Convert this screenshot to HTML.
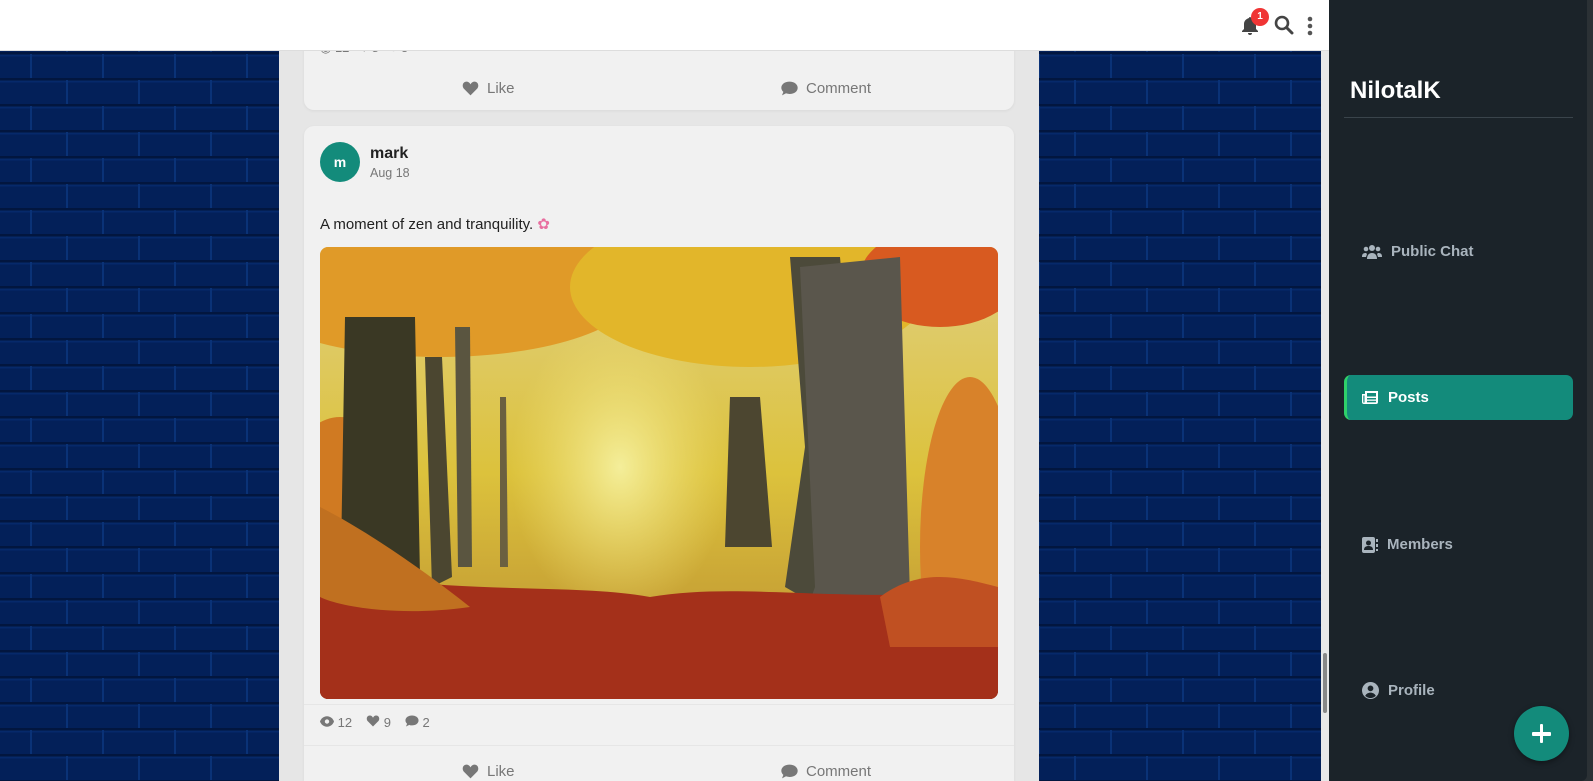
<!DOCTYPE html>
<html><head><meta charset="utf-8"><style>
*{margin:0;padding:0;box-sizing:border-box}
html,body{width:1593px;height:781px;overflow:hidden}
body{position:relative;font-family:"Liberation Sans",sans-serif;background:#2b3135}
.bg{position:absolute;left:0;top:0;width:1321px;height:781px}
.col{position:absolute;left:279px;top:0;width:760px;height:781px;background:#e6e6e6}
.card{position:absolute;left:304px;width:710px;background:#f1f1f1;border-radius:10px;box-shadow:0 1px 3px rgba(0,0,0,.06);overflow:hidden}
.hdr{position:absolute;left:0;top:0;width:1329px;height:51px;background:#fff;border-bottom:1px solid #ddd}
.side{position:absolute;left:1329px;top:0;width:258px;height:781px;background:#1b2329;border-radius:0 0 6px 0}
.gray{color:#777}
.act{position:absolute;font-size:15px;color:#777;display:flex;align-items:center;gap:8px}
.nav{position:absolute;left:1362px;font-size:15px;font-weight:bold;color:#a9b4bd;display:flex;align-items:center;gap:9px}
</style></head><body>
<svg class="bg" width="1321" height="781">
 <defs><pattern id="br" width="144" height="52" patternUnits="userSpaceOnUse">
  <rect width="144" height="52" fill="#032059"/>
  <rect x="0" y="0" width="144" height="2.5" fill="#02163f"/>
  <rect x="0" y="26" width="144" height="2.5" fill="#02163f"/>
  <rect x="0" y="2.5" width="144" height="2" fill="#06296a"/>
  <rect x="0" y="28.5" width="144" height="2" fill="#06296a"/>
  <rect x="30" y="2" width="2" height="24" fill="#0a3277"/>
  <rect x="102" y="2" width="2" height="24" fill="#0a3277"/>
  <rect x="66" y="28" width="2" height="24" fill="#0a3277"/>
  <rect x="138" y="28" width="2" height="24" fill="#0a3277"/>
 </pattern></defs>
 <rect width="1321" height="781" fill="url(#br)"/>
</svg>
<div class="col"></div>
<div style="position:absolute;left:1321px;top:51px;width:8px;height:730px;background:#e8e8e8"></div>
<div style="position:absolute;left:1323px;top:653px;width:4px;height:60px;background:#888;border-radius:2px"></div>

<div class="card" style="top:20px;height:90px">
 <div style="position:absolute;left:16px;top:20px;font-size:13px" class="gray">◉ 12 &nbsp; ♥ 8 &nbsp; ● 5</div>
 <div class="act" style="left:158px;top:60px"><svg width="17" height="15" viewBox="0 0 24 22"><path d="M12 21L2 11C-1 7 1 1 6 1c3 0 5 2 6 4 1-2 3-4 6-4 5 0 7 6 4 10z" fill="#777"/></svg>Like</div>
 <div class="act" style="left:477px;top:60px"><svg width="17" height="15" viewBox="0 0 24 22"><path d="M12 1C5 1 0 5 0 10c0 2 1 4 3 6l-2 5 6-3c2 1 3 1 5 1 7 0 12-4 12-9S19 1 12 1z" fill="#777"/></svg>Comment</div>
</div>
<div class="hdr">
 <svg style="position:absolute;left:1240px;top:16px" width="20" height="20" viewBox="0 0 20 20"><path d="M10 1c-1 0-1 1-1 1C6 3 4 5 4 8v5l-2 2v1h16v-1l-2-2V8c0-3-2-5-5-6 0 0 0-1-1-1zM8 17a2 2 0 004 0z" fill="#444"/></svg>
 <div style="position:absolute;left:1251px;top:8px;width:18px;height:18px;border-radius:50%;background:#f03535;color:#fff;font-size:10px;font-weight:bold;text-align:center;line-height:18px">1</div>
 <svg style="position:absolute;left:1274px;top:15px" width="20" height="20" viewBox="0 0 20 20"><circle cx="8" cy="8" r="6" stroke="#444" stroke-width="2.6" fill="none"/><path d="M12.5 12.5L18 18" stroke="#444" stroke-width="3" stroke-linecap="round"/></svg>
 <svg style="position:absolute;left:1306px;top:15px" width="8" height="22" viewBox="0 0 8 22"><circle cx="4" cy="4" r="2.3" fill="#555"/><circle cx="4" cy="11" r="2.3" fill="#555"/><circle cx="4" cy="18" r="2.3" fill="#555"/></svg>
</div>

<div class="card" style="top:126px;height:655px;border-radius:10px 10px 0 0">
 <div style="position:absolute;left:16px;top:16px;width:40px;height:40px;border-radius:50%;background:#138b7b;color:#fff;font-weight:bold;font-size:14px;text-align:center;line-height:40px">m</div>
 <div style="position:absolute;left:66px;top:19px;font-size:16px;font-weight:bold;color:#222">mark</div>
 <div style="position:absolute;left:66px;top:40px;font-size:12.5px" class="gray">Aug 18</div>
 <div style="position:absolute;left:16px;top:89px;font-size:15px;color:#222">A moment of zen and tranquility. <span style="color:#e86fa0">✿</span></div>
 <svg style="position:absolute;left:16px;top:121px;border-radius:8px" width="678" height="452" viewBox="0 0 678 452">
  <defs><linearGradient id="sk" x1="0" y1="0" x2="0" y2="1"><stop offset="0" stop-color="#e0cf80"/><stop offset=".5" stop-color="#dcc23c"/><stop offset="1" stop-color="#b88a30"/></linearGradient>
  <linearGradient id="fl" x1="0" y1="0" x2="0" y2="1"><stop offset="0" stop-color="#b4482a"/><stop offset="1" stop-color="#7e1a0e"/></linearGradient>
  <radialGradient id="gl" cx=".5" cy=".5" r=".5"><stop offset="0" stop-color="#f4ee9a"/><stop offset="1" stop-color="#f0e070" stop-opacity="0"/></radialGradient></defs>
  <rect width="678" height="452" fill="url(#sk)"/>
  <ellipse cx="300" cy="220" rx="110" ry="150" fill="url(#gl)"/>
  <ellipse cx="120" cy="40" rx="200" ry="70" fill="#e09a28"/>
  <ellipse cx="430" cy="40" rx="180" ry="80" fill="#e2b62a"/>
  <ellipse cx="620" cy="30" rx="80" ry="50" fill="#d85a20"/>
  <ellipse cx="20" cy="300" rx="70" ry="130" fill="#d07a22"/>
  <ellipse cx="650" cy="300" rx="50" ry="170" fill="#d8822a"/>
  <path d="M25 70L95 70 100 330 135 370 20 370z" fill="#3a3824"/>
  <path d="M105 110L122 110 132 330 112 340z" fill="#4b4630"/>
  <path d="M135 80L150 80 152 320 138 320z" fill="#5a5540"/>
  <path d="M180 150L186 150 188 320 180 320z" fill="#6b6040"/>
  <path d="M410 150L440 150 452 300 405 300z" fill="#4c4630"/>
  <path d="M470 10L520 10 530 120 545 340 500 360 465 340 485 200z" fill="#4c4a3a"/>
  <path d="M480 20L580 10 590 350 640 400 470 410 495 340z" fill="#5a564c"/>
  <rect x="0" y="360" width="678" height="92" fill="url(#fl)"/>
  <path d="M0 320C120 350 250 335 330 350 420 335 500 355 678 345V452H0z" fill="#a4301a"/>
  <path d="M0 260C40 280 100 320 150 360 80 370 20 360 0 350z" fill="#c07020"/>
  <path d="M560 350C600 320 640 330 678 340V400H570z" fill="#c05022"/>
 </svg>
 <div style="position:absolute;left:0;top:578px;width:710px;border-top:1px solid #e6e6e6"></div>
 <div style="position:absolute;left:16px;top:589px;font-size:13px;display:flex;gap:14px" class="gray">
  <span><svg width="14" height="11" viewBox="0 0 16 12"><path d="M8 0C4 0 1 3 0 6c1 3 4 6 8 6s7-3 8-6c-1-3-4-6-8-6z" fill="#777"/><circle cx="8" cy="6" r="2.5" fill="#f1f1f1"/></svg> 12</span>
  <span><svg width="14" height="12" viewBox="0 0 24 22"><path d="M12 21L2 11C-1 7 1 1 6 1c3 0 5 2 6 4 1-2 3-4 6-4 5 0 7 6 4 10z" fill="#777"/></svg> 9</span>
  <span><svg width="14" height="12" viewBox="0 0 24 22"><path d="M12 1C5 1 0 5 0 10c0 2 1 4 3 6l-2 5 6-3c2 1 3 1 5 1 7 0 12-4 12-9S19 1 12 1z" fill="#777"/></svg> 2</span>
 </div>
 <div style="position:absolute;left:0;top:619px;width:710px;border-top:1px solid #e6e6e6"></div>
 <div class="act" style="left:158px;top:637px"><svg width="17" height="15" viewBox="0 0 24 22"><path d="M12 21L2 11C-1 7 1 1 6 1c3 0 5 2 6 4 1-2 3-4 6-4 5 0 7 6 4 10z" fill="#777"/></svg>Like</div>
 <div class="act" style="left:477px;top:637px"><svg width="17" height="15" viewBox="0 0 24 22"><path d="M12 1C5 1 0 5 0 10c0 2 1 4 3 6l-2 5 6-3c2 1 3 1 5 1 7 0 12-4 12-9S19 1 12 1z" fill="#777"/></svg>Comment</div>
</div>

<div class="side">
 <div style="position:absolute;left:21px;top:77px;font-size:24px;font-weight:bold;color:#fff">NilotalK</div>
 <div style="position:absolute;left:15px;top:117px;width:229px;border-top:1px solid #3a444b"></div>
</div>
<div class="nav" style="top:243px"><svg width="20" height="16" viewBox="0 0 20 16"><circle cx="10" cy="4" r="3" fill="#a9b4bd"/><circle cx="4" cy="5" r="2.3" fill="#a9b4bd"/><circle cx="16" cy="5" r="2.3" fill="#a9b4bd"/><path d="M5 15c0-4 2-6 5-6s5 2 5 6zM0 13c0-3 1-4 4-4l1 1-1 3zM20 13c0-3-1-4-4-4l-1 1 1 3z" fill="#a9b4bd"/></svg>Public Chat</div>
<div style="position:absolute;left:1344px;top:375px;width:229px;height:45px;border-radius:7px;background:#138b7b;border-left:3px solid #2fd06a"></div>
<div class="nav" style="top:389px;color:#fff"><svg width="17" height="15" viewBox="0 0 17 15"><path d="M3 1h13v11a2 2 0 01-2 2H2a2 2 0 01-2-2V4h3z" fill="#fff"/><rect x="5" y="3" width="9" height="3.5" fill="#138b7b"/><rect x="5" y="8" width="9" height="1.5" fill="#138b7b"/><rect x="5" y="10.8" width="9" height="1.5" fill="#138b7b"/><rect x="1.3" y="5.5" width="1.2" height="7" fill="#138b7b"/></svg>Posts</div>
<div class="nav" style="top:536px"><svg width="16" height="16" viewBox="0 0 16 16"><rect x="0" y="0" width="13" height="16" rx="2" fill="#a9b4bd"/><circle cx="6.5" cy="6" r="2.5" fill="#1b2329"/><path d="M2 13c0-3 2-4 4.5-4s4.5 1 4.5 4z" fill="#1b2329"/><rect x="14" y="2" width="2" height="3" fill="#a9b4bd"/><rect x="14" y="7" width="2" height="3" fill="#a9b4bd"/><rect x="14" y="12" width="2" height="2" fill="#a9b4bd"/></svg>Members</div>
<div class="nav" style="top:682px"><svg width="17" height="17" viewBox="0 0 16 16"><circle cx="8" cy="8" r="8" fill="#a9b4bd"/><circle cx="8" cy="6" r="2.7" fill="#1b2329"/><path d="M3 13c1-2 3-3 5-3s4 1 5 3c-1 1-3 2-5 2s-4-1-5-2z" fill="#1b2329"/></svg>Profile</div>
<div style="position:absolute;left:1514px;top:706px;width:55px;height:55px;border-radius:50%;background:#138b7b;box-shadow:0 2px 6px rgba(0,0,0,.4)">
 <div style="position:absolute;left:18px;top:26px;width:19px;height:3.5px;background:#fff;border-radius:1px"></div>
 <div style="position:absolute;left:25.7px;top:18px;width:3.5px;height:19px;background:#fff;border-radius:1px"></div>
</div>
</body></html>
